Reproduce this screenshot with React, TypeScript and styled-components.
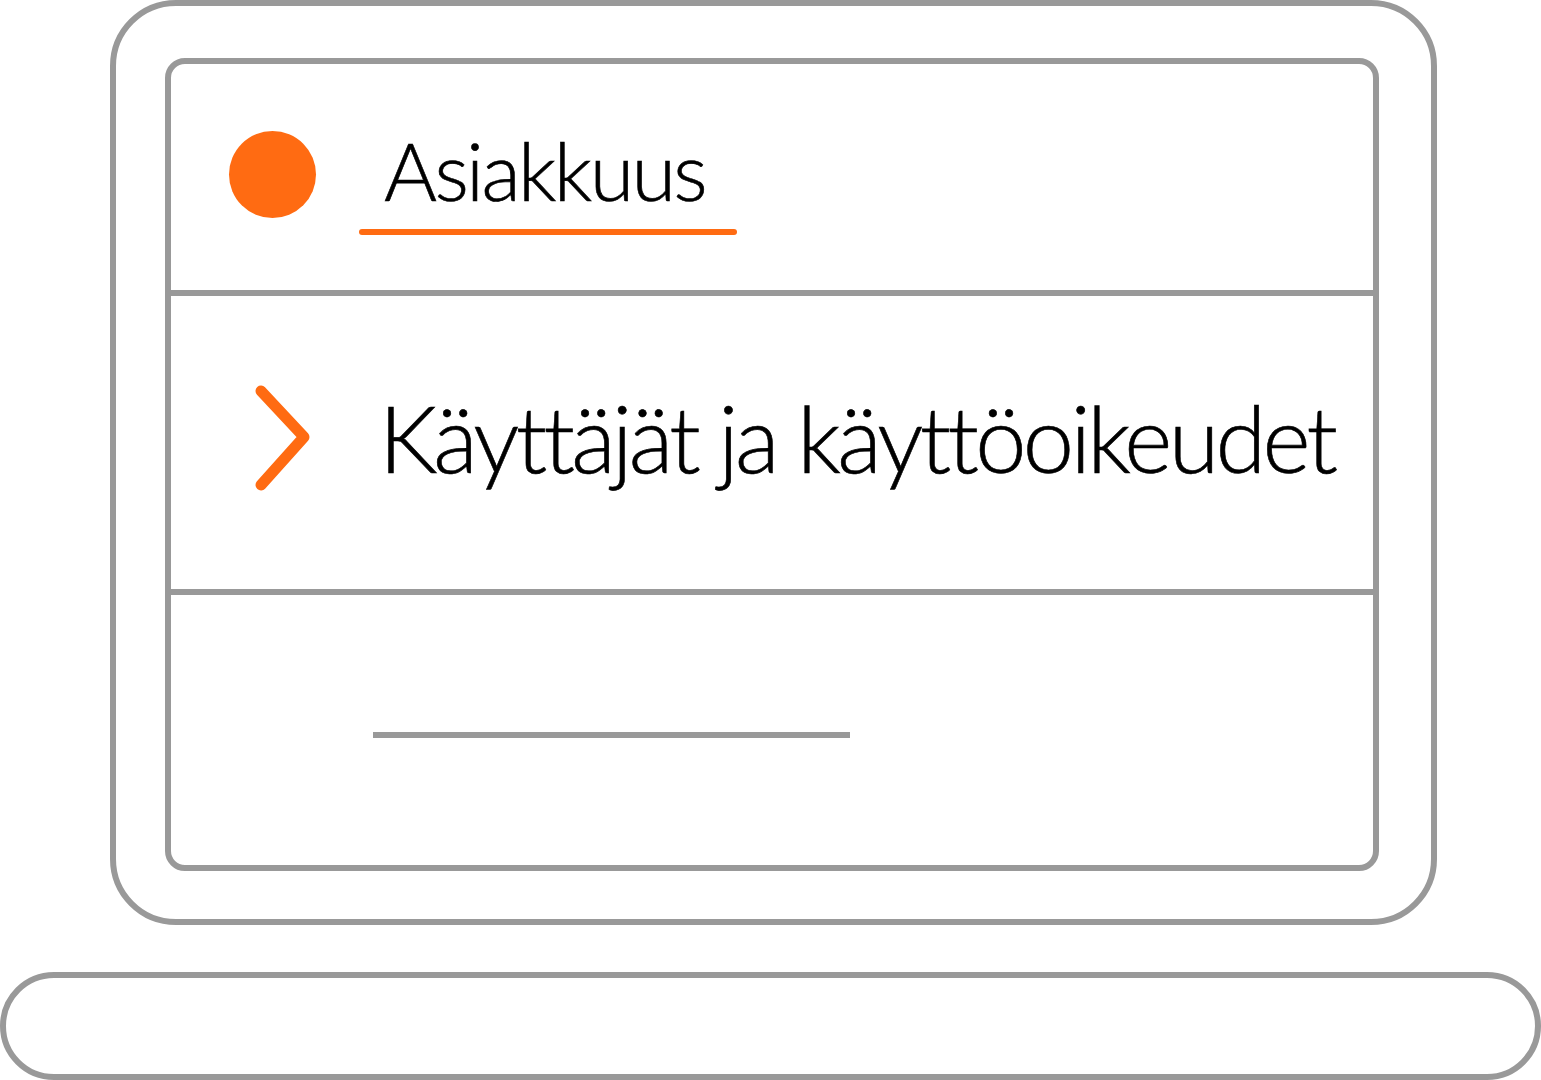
import React from "react";
import styled, { createGlobalStyle } from "styled-components";

const GRAY = "#999999";
const ORANGE = "#ff6b12";

const GlobalStyle = createGlobalStyle`
  html, body { margin: 0; padding: 0; background: #ffffff; }
  body {
    width: 1541px;
    height: 1080px;
    overflow: hidden;
    font-family: Lato, "Liberation Sans", sans-serif;
    color: #000000;
  }
  * { box-sizing: border-box; }
`;

const Page = styled.div`
  display: flex;
  flex-direction: column;
  width: 1541px;
  height: 1080px;
`;

const Lid = styled.div`
  margin-left: 110px;
  width: 1327px;
  height: 925px;
  border: 6px solid ${GRAY};
  border-radius: 66px;
  padding: 52px 52px 48px 49px;
  display: flex;
  flex: none;
`;

const Screen = styled.div`
  flex: 1;
  min-width: 0;
  border: 6px solid ${GRAY};
  border-radius: 20px;
  display: flex;
  flex-direction: column;
`;

const Row = styled.div<{ $h?: number }>`
  display: flex;
  align-items: flex-start;
  min-width: 0;
  ${(p) => (p.$h ? `height: ${p.$h}px; flex: none;` : "flex: 1;")}
`;

const Divider = styled.div`
  height: 6px;
  margin: 0 -6px;
  background: ${GRAY};
  flex: none;
`;

const Dot = styled.div`
  width: 87px;
  height: 87px;
  margin: 67px 0 0 58px;
  border-radius: 50%;
  background: ${ORANGE};
  flex: none;
`;

const TitleBlock = styled.div`
  display: flex;
  flex-direction: column;
  margin-left: 43px;
`;

const Title = styled.div<{ $size: number; $track: number }>`
  font-size: ${(p) => p.$size}px;
  letter-spacing: ${(p) => p.$track}px;
  line-height: 1;
  font-weight: 300;
  white-space: nowrap;
  -webkit-text-stroke: 0.6px #000;
`;

const HeaderTitle = styled(Title)`
  margin-top: 65px;
  padding-left: 25px;
`;

const Underline = styled.div`
  width: 378px;
  height: 6px;
  margin-top: 19px;
  border-radius: 3px;
  background: ${ORANGE};
`;

const Chevron = styled.svg`
  flex: none;
  margin: 88px 0 0 84px;
`;

const ItemTitle = styled(Title)`
  margin: 96px 0 0 66px;
`;

const Placeholder = styled.div`
  width: 477px;
  height: 6px;
  margin: 137px 0 0 202px;
  background: ${GRAY};
`;

const Base = styled.div`
  margin-top: 47px;
  width: 1541px;
  height: 108px;
  border: 6px solid ${GRAY};
  border-radius: 54px;
  flex: none;
`;

export default function App() {
  return (
    <>
      <GlobalStyle />
      <Page>
        <Lid>
          <Screen>
            <Row $h={226}>
              <Dot />
              <TitleBlock>
                <HeaderTitle $size={81} $track={-2.7}>
                  Asiakkuus
                </HeaderTitle>
                <Underline />
              </TitleBlock>
            </Row>
            <Divider />
            <Row $h={293}>
              <Chevron width="58" height="108" viewBox="0 0 58 108">
                <polyline
                  points="6,7 49,53 6,101"
                  fill="none"
                  stroke={ORANGE}
                  strokeWidth="11"
                  strokeLinecap="round"
                  strokeLinejoin="round"
                />
              </Chevron>
              <ItemTitle $size={92} $track={-3.7}>
                Käyttäjät ja käyttöoikeudet
              </ItemTitle>
            </Row>
            <Divider />
            <Row>
              <Placeholder />
            </Row>
          </Screen>
        </Lid>
        <Base />
      </Page>
    </>
  );
}
